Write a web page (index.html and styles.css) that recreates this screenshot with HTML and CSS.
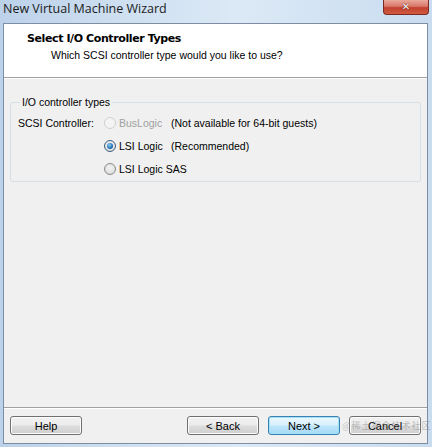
FILE: index.html
```html
<!DOCTYPE html>
<html>
<head>
<meta charset="utf-8">
<link rel="stylesheet" href="styles.css">
</head>
<body>
<div class="window">
  <div class="titlebar">
    <span class="title">New Virtual Machine Wizard</span>
    <div class="close"><span class="x">✕</span></div>
  </div>
  <div class="client">
    <div class="header">
      <div class="h-title">Select I/O Controller Types</div>
      <div class="h-sub">Which SCSI controller type would you like to use?</div>
    </div>
    <div class="content">
      <fieldset class="group">
        <legend>I/O controller types</legend>
        <div class="row">
          <span class="lbl">SCSI Controller:</span>
          <span class="radio disabled"></span>
          <span class="opt disabled-text">BusLogic</span>
          <span class="note">(Not available for 64-bit guests)</span>
        </div>
        <div class="row">
          <span class="lbl"></span>
          <span class="radio checked"><span class="dot"></span></span>
          <span class="opt">LSI Logic</span>
          <span class="note">(Recommended)</span>
        </div>
        <div class="row">
          <span class="lbl"></span>
          <span class="radio"></span>
          <span class="opt">LSI Logic SAS</span>
        </div>
      </fieldset>
    </div>
    <div class="footer">
      <div class="btn">Help</div>
      <div class="spacer"></div>
      <div class="btn">&lt; Back</div>
      <div class="btn default">Next &gt;</div>
      <div class="btn cancel">Cancel<span class="wm">@稀土掘金技术社区</span></div>
    </div>
  </div>
</div>
</body>
</html>
```
FILE: styles.css
```css
* { box-sizing: border-box; }
html, body { margin: 0; padding: 0; }
body {
  width: 432px;
  height: 447px;
  overflow: hidden;
  font-family: "Liberation Sans", Arial, sans-serif;
  font-size: 10.5px;
  color: #000;
}
.window {
  width: 432px;
  height: 447px;
  display: flex;
  flex-direction: column;
  padding: 0 4px 3px 3px;
  background: linear-gradient(90deg, #bcd2ea 0%, #cfe0f1 30%, #dce9f6 55%, #c9dcf0 100%);
}
.titlebar {
  height: 23px;
  flex: none;
  display: flex;
  align-items: flex-start;
  position: relative;
}
.title {
  font-family: "Open Sans", "Liberation Sans", sans-serif;
  font-size: 12.5px;
  line-height: 16px;
  padding-top: 1px;
  color: #1b1b1b;
}
.close {
  position: absolute;
  right: -1px;
  top: 0;
  width: 46px;
  height: 15px;
  border: 1px solid #7a2a22;
  border-top: none;
  border-radius: 0 0 4px 4px;
  background: linear-gradient(180deg, #e9a99c 0%, #d9786a 45%, #c2412f 55%, #d05a40 100%);
  display: flex;
  justify-content: center;
  align-items: center;
}
.close .x {
  color: #fff;
  font-family: "DejaVu Sans", sans-serif;
  font-weight: bold;
  font-size: 10px;
  line-height: 10px;
  text-shadow: 0 0 1px #5a1a12, 0 0 1px #5a1a12;
}
.client {
  flex: 1;
  display: flex;
  flex-direction: column;
  background: #f0f0f0;
  border: 1px solid #7d8ea3;
}
.header {
  height: 54px;
  flex: none;
  background: #fff;
  border-bottom: 1px solid #a0a0a0;
  box-shadow: 0 1px 0 #fff;
  padding: 8px 0 0 23px;
}
.h-title {
  font-weight: bold;
  font-size: 11px;
  line-height: 14px;
  font-family: "DejaVu Sans", sans-serif;
  letter-spacing: -0.4px;
}
.h-sub {
  margin-left: 24px;
  margin-top: 2px;
  line-height: 14px;
  font-size: 10.5px;
}
.content {
  flex: 1;
  padding: 18px 6px 0 6px;
}
.group {
  margin: 0;
  height: 86px;
  border: 1px solid #d5dfe5;
  border-radius: 3px;
  padding: 3px 0 0 7px;
}
.group legend {
  padding: 0 2px;
  margin-left: 2px;
  font-size: 10.5px;
  line-height: 12px;
}
.row {
  display: flex;
  align-items: center;
  height: 23px;
}
.lbl { width: 86px; flex: none; }
.radio {
  width: 12px;
  height: 12px;
  border-radius: 50%;
  border: 1px solid #8a8a8a;
  background: radial-gradient(circle at 50% 40%, #f4f4f4 0%, #e2e2e2 60%, #cfcfcf 100%);
  margin-right: 3px;
  flex: none;
  display: flex;
  align-items: center;
  justify-content: center;
}
.radio.disabled {
  border-color: #cfcfcf;
  background: #f4f4f4;
}
.radio.checked { border-color: #3c5f80; }
.radio .dot {
  width: 6px;
  height: 6px;
  border-radius: 50%;
  background: radial-gradient(circle at 40% 35%, #8fd0f5 0%, #1f6fb5 60%, #0d3f73 100%);
}
.opt { min-width: 52px; flex: none; white-space: nowrap; }
.disabled-text { color: #a0a0a0; }
.note { white-space: nowrap; }
.footer {
  height: 36px;
  flex: none;
  border-top: 1px solid #a0a0a0;
  box-shadow: inset 0 1px 0 #fff;
  display: flex;
  align-items: flex-start;
  padding: 8px 6px 0 6px;
  gap: 9px;
}
.spacer { flex: 1; }
.btn {
  width: 72px;
  height: 19px;
  border: 1px solid #707070;
  border-radius: 3px;
  background: linear-gradient(180deg, #f2f2f2 0%, #ebebeb 48%, #dddddd 52%, #cfcfcf 100%);
  box-shadow: inset 0 0 0 1px #fcfcfc;
  display: flex;
  align-items: center;
  justify-content: center;
  font-size: 11px;
  position: relative;
}
.btn.default {
  border-color: #3c7fb1;
  background: linear-gradient(180deg, #eaf6fd 0%, #d9f0fc 48%, #bee6fd 52%, #a7d9f5 100%);
  box-shadow: inset 0 0 0 1px #9ee3f8;
}
.btn.cancel { overflow: visible; }
.wm {
  position: absolute;
  left: -8px;
  top: 3px;
  font-family: "Noto Sans CJK SC", sans-serif;
  font-size: 9px;
  line-height: 11px;
  color: rgba(120,120,120,0.45);
  white-space: nowrap;
  letter-spacing: 1px;
}
```
